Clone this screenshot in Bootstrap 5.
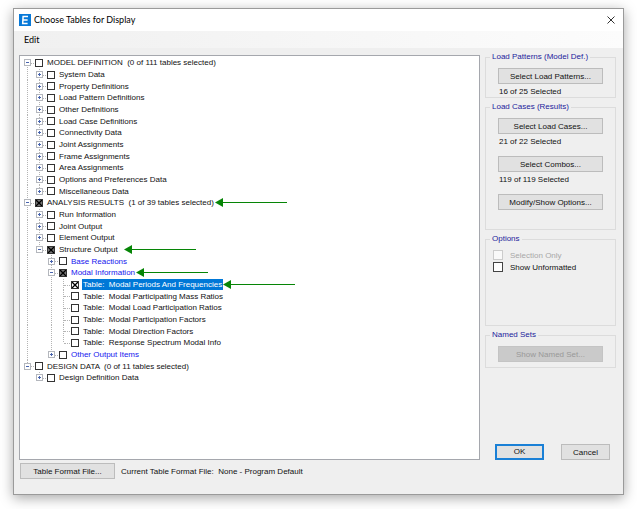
<!DOCTYPE html>
<html lang="en">
<head>
<meta charset="utf-8">
<meta name="viewport" content="width=device-width, initial-scale=1">
<title>Choose Tables for Display</title>
<link href="https://cdn.jsdelivr.net/npm/bootstrap@5.3.0/dist/css/bootstrap.min.css" rel="stylesheet">
<style>
body { font: 8px/11px "Liberation Sans", Arial, sans-serif; color: #111; background: #fff; padding: 8px 13px 14px; }
.dialog { background: #efefef; border: 1px solid #9a9a9a; box-shadow: 0 3px 12px rgba(0,0,0,.35); }
.titlebar { height: 22px; padding: 0 8px 0 5px; background: #fff; }
.titlebar h1 { font: 9px/14px Lato, sans-serif; color: #000; margin-left: 3px; }
.menubar { height: 17px; padding-left: 10px; background: linear-gradient(90deg, #f0f0f0, #fcfcfc); }
.menubar button { font: 9px/14px Lato, sans-serif; color: #000; }
.workspace { padding: 0 7px 0 5px; gap: 5px; }
.tree-box { margin-top: 7px; padding: 1px 0 0 2px; background: #fff; border: 1px solid #a5a7ad; }
.tree { height: 327px; }
.tree li { min-height: 0; }
.guide, .node { width: 12px; height: 100%; flex: none; }
.guide.line, .node.mid { background: repeating-linear-gradient(#b4b4b4 0 1px, transparent 1px 2px) 5px 0 / 1px 100% no-repeat; }
.node.first { background: repeating-linear-gradient(#b4b4b4 0 1px, transparent 1px 2px) 5px 100% / 1px 50% no-repeat; }
.node.last { background: repeating-linear-gradient(#b4b4b4 0 1px, transparent 1px 2px) 5px 0 / 1px 50% no-repeat; }
.node::after { content: ""; position: absolute; left: 6px; top: 50%; width: 6px; border-top: 1px dotted #b4b4b4; }
.toggle { position: relative; z-index: 1; width: 7px; height: 7px; margin-left: 2px; border: 1px solid #b4b7bd;
  background: linear-gradient(#4763ae, #4763ae) center / 3px 1px no-repeat #fff; }
.toggle.plus { background: linear-gradient(#4763ae, #4763ae) center / 3px 1px no-repeat, linear-gradient(#4763ae, #4763ae) center / 1px 3px no-repeat, #fff; }
.tick { appearance: none; flex: none; width: 8px; height: 8px; margin: 0 3px 0 1px; border: 1px solid #333; background: #fff; }
.tick:checked { background: url("data:image/svg+xml,%3Csvg xmlns='http://www.w3.org/2000/svg' viewBox='0 0 6 6'%3E%3Cpath d='M0 0L6 6M6 0L0 6' stroke='%23000' stroke-width='1.3'/%3E%3C/svg%3E") center / 6px 6px #fff; }
.tick.partial:checked { background-color: #777; }
.tree label { white-space: pre; padding: 0 1px; }
.tree .sub { color: #1616ee; }
.tree .chosen { background: #0078d7; color: #fff; }
.arrow { position: absolute; top: 50%; width: 72px; height: 9px; margin-top: -5px; }
.arrow-analysis { left: 193px; }
.arrow-structure { left: 102px; }
.arrow-modal { left: 114px; }
.arrow-periods { left: 201px; }
.side { width: 131px; margin-top: 4px; gap: 4px; }
.group { border: 1px solid #dcdcdc; padding: 6px 12px 0; }
.group legend { float: none; width: auto; margin: 0 0 0 -8px; padding: 0 2px; font-size: 8px; line-height: 10px; color: #1c1c9c; }
.group-cases { padding-bottom: 19px; }
.group-options { padding: 6px 7px 53px; }
.group-options legend { margin-left: -3px; }
.group-sets { padding-bottom: 5px; }
.status { margin: 2px 0 0 1px; }
.status + .push { margin-top: 9px; }
.push { height: 16px; padding: 0; font-size: 8px; line-height: 13px; border: 1px solid #bcbcbc; border-radius: 0; background: #e1e1e1; color: #111; }
.push:disabled { background: #cacaca; border-color: #c4c4c4; color: #999; opacity: 1; }
.push.default { border: 2px solid #1a80d6; line-height: 12px; }
.option { height: 10px; gap: 7px; }
.option + .option { margin-top: 2px; }
.option input { appearance: none; width: 10px; height: 10px; margin: 0; border: 1px solid #444; background: #fff; }
.option input:disabled { border-color: #ccc; background: #f9f9f9; }
.option input:disabled + label { color: #a8a8a8; }
.actions { padding: 0 6px 0 10px; }
.actions .push { width: 49px; }
.footer-bar { height: 34px; padding: 3px 6px 0; gap: 6px; }
.footer-bar .push { width: 95px; }
.footer-bar output { margin-top: 3px; white-space: pre; }
</style>
<script src="https://cdn.jsdelivr.net/npm/bootstrap@5.3.0/dist/js/bootstrap.bundle.min.js"></script>
</head>
<body class="min-vh-100 d-flex">
<svg class="d-none"><symbol id="arrow" viewBox="0 0 72 9"><path d="M7 4H72V5H7Z" fill="#068506" shape-rendering="crispEdges"/><path d="M0 4.5L8 0V9Z" fill="#068506"/></symbol></svg>
<main class="dialog flex-fill d-flex flex-column">
  <header class="titlebar d-flex align-items-center">
    <svg width="12" height="12" viewBox="0 0 12 12" aria-hidden="true"><path fill="#0879d8" d="M0 0h12v12H0z"/><path d="M9 2.6H4.1L3.7 9.4H8.6M3.9 6H8.6" fill="none" stroke="#fff" stroke-width="1.5"/></svg>
    <h1 class="mb-0 flex-fill">Choose Tables for Display</h1>
    <button class="btn p-0 border-0 d-flex" aria-label="Close"><svg width="8" height="8" viewBox="0 0 8 8"><path d="M.5.5l7 7M7.5.5l-7 7" stroke="#333" stroke-width="1"/></svg></button>
  </header>
  <nav class="menubar d-flex align-items-center"><button class="btn p-0 border-0">Edit</button></nav>
  <div class="workspace d-flex flex-fill">
    <section class="tree-box flex-fill" aria-label="Tables">
      <ul class="tree list-unstyled mb-0 d-flex flex-column" id="tree"></ul>
    </section>
    <aside class="side d-flex flex-column flex-shrink-0">
      <fieldset class="group group-patterns">
        <legend>Load Patterns (Model Def.)</legend>
        <button class="btn push d-block w-100">Select Load Patterns...</button>
        <p class="status mb-0">16 of 25 Selected</p>
      </fieldset>
      <fieldset class="group group-cases">
        <legend>Load Cases (Results)</legend>
        <button class="btn push d-block w-100">Select Load Cases...</button>
        <p class="status mb-0">21 of 22 Selected</p>
        <button class="btn push d-block w-100">Select Combos...</button>
        <p class="status mb-0">119 of 119 Selected</p>
        <button class="btn push d-block w-100">Modify/Show Options...</button>
      </fieldset>
      <fieldset class="group group-options">
        <legend>Options</legend>
        <div class="option d-flex align-items-center"><input type="checkbox" id="selOnly" disabled><label for="selOnly">Selection Only</label></div>
        <div class="option d-flex align-items-center"><input type="checkbox" id="unformatted"><label for="unformatted">Show Unformatted</label></div>
      </fieldset>
      <fieldset class="group group-sets">
        <legend>Named Sets</legend>
        <button class="btn push d-block w-100" disabled>Show Named Set...</button>
      </fieldset>
      <div class="actions d-flex justify-content-between mt-auto">
        <button class="btn push default">OK</button>
        <button class="btn push">Cancel</button>
      </div>
    </aside>
  </div>
  <footer class="footer-bar d-flex align-items-start">
    <button class="btn push">Table Format File...</button>
    <output>Current Table Format File:  None - Program Default</output>
  </footer>
</main>
<script>
// Each row: level, label, node line shape, toggle, check state, label class, arrow
const rows = [
  [0, "MODEL DEFINITION  (0 of 111 tables selected)", "first", "minus"],
  [1, "System Data"], [1, "Property Definitions"], [1, "Load Pattern Definitions"],
  [1, "Other Definitions"], [1, "Load Case Definitions"], [1, "Connectivity Data"],
  [1, "Joint Assignments"], [1, "Frame Assignments"], [1, "Area Assignments"],
  [1, "Options and Preferences Data"], [1, "Miscellaneous Data", "last"],
  [0, "ANALYSIS RESULTS  (1 of 39 tables selected)", "mid", "minus", "partial", "", "analysis"],
  [1, "Run Information"], [1, "Joint Output"], [1, "Element Output"],
  [1, "Structure Output", "last", "minus", "partial", "", "structure"],
  [2, "Base Reactions", "mid", "plus", "", "sub"],
  [2, "Modal Information", "mid", "minus", "partial", "sub", "modal"],
  [3, "Table:  Modal Periods And Frequencies", "mid", "none", "full", "chosen", "periods"],
  [3, "Table:  Modal Participating Mass Ratios", "mid", "none"],
  [3, "Table:  Modal Load Participation Ratios", "mid", "none"],
  [3, "Table:  Modal Participation Factors", "mid", "none"],
  [3, "Table:  Modal Direction Factors", "mid", "none"],
  [3, "Table:  Response Spectrum Modal Info", "last", "none"],
  [2, "Other Output Items", "last", "plus", "", "sub"],
  [0, "DESIGN DATA  (0 of 11 tables selected)", "last", "minus"],
  [1, "Design Definition Data", "last"]
];
document.getElementById("tree").innerHTML = rows.map(([level, text, shape = "mid", toggle = "plus", state = "", cls = "", arrow], i) => {
  let guides = "";
  for (let g = 0; g < level; g++) {
    const line = (g === 0 && i < 26) || (g === 2);
    guides += `<span class="guide ${line ? "line" : ""}"></span>`;
  }
  const button = toggle === "none" ? "" : `<button class="toggle ${toggle} p-0 d-block" aria-label="Toggle ${text}"></button>`;
  return `<li class="d-flex align-items-center flex-fill position-relative">${guides}` +
    `<span class="node ${shape} d-flex align-items-center position-relative">${button}</span>` +
    `<input class="tick ${state}" type="checkbox" id="t${i}" ${state ? "checked" : ""}>` +
    `<label class="${cls}" for="t${i}">${text}</label>` +
    (arrow ? `<svg class="arrow arrow-${arrow}" aria-hidden="true"><use href="#arrow"/></svg>` : "") + `</li>`;
}).join("");
</script>
</body>
</html>
